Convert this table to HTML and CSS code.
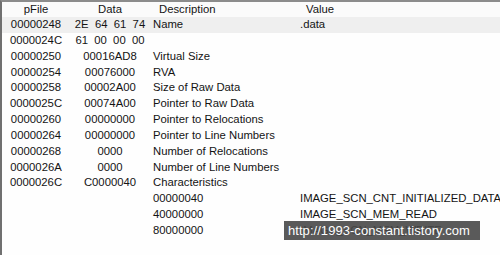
FILE: index.html
```html
<!DOCTYPE html>
<html>
<head>
<meta charset="utf-8">
<link rel="stylesheet" href="styles.css">
</head>
<body>
<div class="view">
  <div class="row head">
    <div class="c1">pFile</div>
    <div class="c2">Data</div>
    <div class="c3">Description</div>
    <div class="c4">Value</div>
  </div>
  <div class="row sel">
    <div class="c1">00000248</div>
    <div class="c2">2E&nbsp; 64&nbsp; 61&nbsp; 74</div>
    <div class="c3">Name</div>
    <div class="c4">.data</div>
  </div>
  <div class="row">
    <div class="c1">0000024C</div>
    <div class="c2">61&nbsp; 00&nbsp; 00&nbsp; 00</div>
    <div class="c3"></div>
    <div class="c4"></div>
  </div>
  <div class="row">
    <div class="c1">00000250</div>
    <div class="c2">00016AD8</div>
    <div class="c3">Virtual Size</div>
    <div class="c4"></div>
  </div>
  <div class="row">
    <div class="c1">00000254</div>
    <div class="c2">00076000</div>
    <div class="c3">RVA</div>
    <div class="c4"></div>
  </div>
  <div class="row">
    <div class="c1">00000258</div>
    <div class="c2">00002A00</div>
    <div class="c3">Size of Raw Data</div>
    <div class="c4"></div>
  </div>
  <div class="row">
    <div class="c1">0000025C</div>
    <div class="c2">00074A00</div>
    <div class="c3">Pointer to Raw Data</div>
    <div class="c4"></div>
  </div>
  <div class="row">
    <div class="c1">00000260</div>
    <div class="c2">00000000</div>
    <div class="c3">Pointer to Relocations</div>
    <div class="c4"></div>
  </div>
  <div class="row">
    <div class="c1">00000264</div>
    <div class="c2">00000000</div>
    <div class="c3">Pointer to Line Numbers</div>
    <div class="c4"></div>
  </div>
  <div class="row">
    <div class="c1">00000268</div>
    <div class="c2">0000</div>
    <div class="c3">Number of Relocations</div>
    <div class="c4"></div>
  </div>
  <div class="row">
    <div class="c1">0000026A</div>
    <div class="c2">0000</div>
    <div class="c3">Number of Line Numbers</div>
    <div class="c4"></div>
  </div>
  <div class="row">
    <div class="c1">0000026C</div>
    <div class="c2">C0000040</div>
    <div class="c3">Characteristics</div>
    <div class="c4"></div>
  </div>
  <div class="row">
    <div class="c1"></div>
    <div class="c2"></div>
    <div class="c3">00000040</div>
    <div class="c4">IMAGE_SCN_CNT_INITIALIZED_DATA</div>
  </div>
  <div class="row">
    <div class="c1"></div>
    <div class="c2"></div>
    <div class="c3">40000000</div>
    <div class="c4">IMAGE_SCN_MEM_READ</div>
  </div>
  <div class="row">
    <div class="c1"></div>
    <div class="c2"></div>
    <div class="c3">80000000</div>
    <div class="c4">IMAGE_SCN_MEM_WRITE</div>
  </div>
  <div class="mark">http://1993-constant.tistory.com</div>
</div>
</body>
</html>
```
FILE: styles.css
```css
html, body {
  margin: 0;
  padding: 0;
  background: #fefefe;
}
.view {
  position: relative;
  width: 498px;
  height: 253px;
  border-top: 2px solid #8c8c8c;
  border-left: 2px solid #707070;
  font-family: "Liberation Sans", Arial, sans-serif;
  font-size: 11.3px;
  color: #141414;
  overflow: hidden;
}
.row {
  display: grid;
  grid-template-columns: 68px 80px 148px 1fr;
  height: 15.85px;
  line-height: 15.85px;
  white-space: nowrap;
}
.row.head {
  height: 15px;
  line-height: 15px;
  background: #fbfbfb;
}
.row.sel {
  background: #efefef;
}
.c1, .c2 {
  text-align: center;
}
.c3 {
  padding-left: 3px;
}
.c4 {
  padding-left: 2px;
}
.head .c3 {
  padding-left: 9px;
}
.head .c4 {
  padding-left: 8px;
}
.mark {
  position: absolute;
  left: 282px;
  top: 219px;
  width: 196px;
  height: 19px;
  line-height: 19px;
  padding-left: 4px;
  box-sizing: border-box;
  background: rgba(72, 72, 72, 0.9);
  color: #ffffff;
  font-family: "Liberation Sans", Arial, sans-serif;
  font-size: 13px;
  letter-spacing: 0.05px;
  white-space: nowrap;
}
```
